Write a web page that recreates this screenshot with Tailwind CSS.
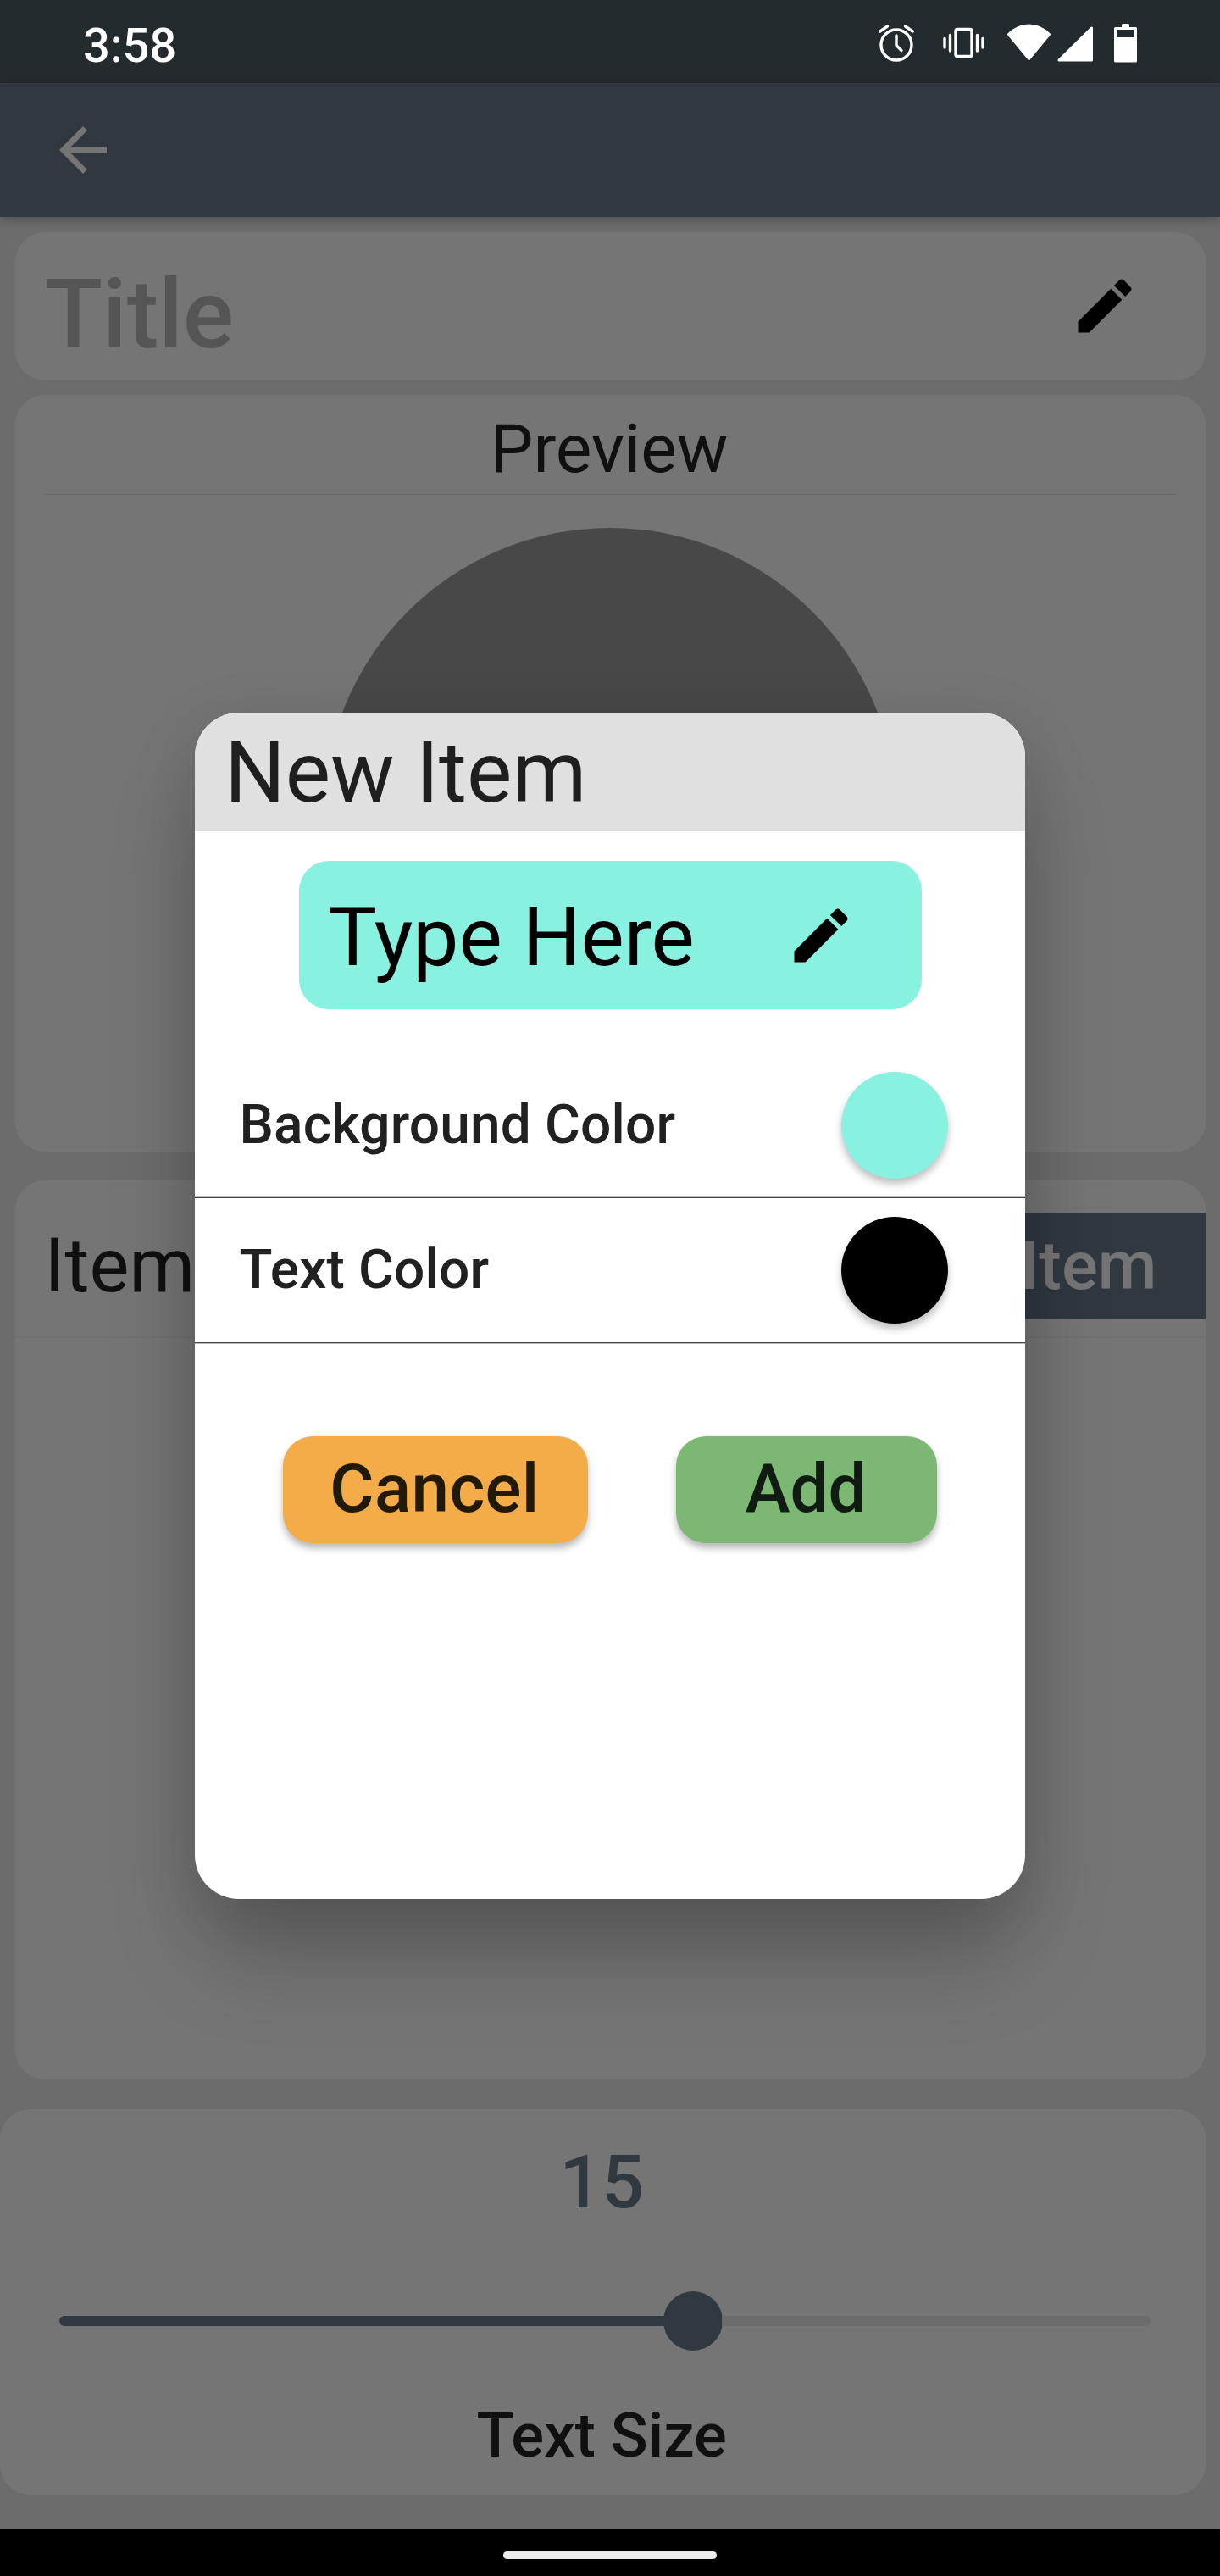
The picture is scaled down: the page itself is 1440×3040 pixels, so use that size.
<!DOCTYPE html>
<html lang="en">
<head>
<meta charset="utf-8">
<title>New Item</title>
<script src="https://cdn.jsdelivr.net/npm/@tailwindcss/browser@4"></script>
</head>
<body class="bg-[#6c6c6c]">
<div class="relative flex flex-col w-[1440px] h-[3040px] overflow-hidden bg-[#6c6c6c] font-[Roboto,sans-serif] text-[#101010]">

  <!-- Status bar -->
  <header class="flex items-center justify-between h-[98px] shrink-0 bg-[#242b2e] pl-[98px] pr-[97px] text-white">
    <span class="text-[56px] leading-[98px] font-medium pt-[10px]">3:58</span>
    <svg class="w-[309px] h-[60px] mt-[2px]" viewBox="1034 20 309 60" fill="none" stroke="white" stroke-width="3.4" stroke-linecap="round" stroke-linejoin="round">
      <circle cx="1058" cy="53" r="18"/>
      <path d="M1058 42v11.5l6 6M1038.7 37l8.8-6M1077.3 37l-8.800-6"/>
      <rect x="1128" y="34.500" width="19" height="32" rx="2"/>
      <path d="M1121.500 41.500v18.500M1153.500 41.500v18.500M1115 45.500v10.500M1160 45.500v10.500"/>
      <path fill="white" stroke-width="3" d="M1214.500 69.500L1190.500 40.500Q1201 30 1214.500 30T1238.500 40.500Z"/>
      <path fill="white" stroke-width="3" d="M1288.500 33v38h-38.500Z"/>
      <path fill="white" stroke="none" fill-rule="evenodd" d="M1324 32v-2.500q0-1.500 1.500-1.500h6q1.500 0 1.500 1.500V32h7.500q1.500 0 1.500 1.500v38.500q0 1.500-1.500 1.500h-24q-1.500 0-1.500-1.500V33.500q0-1.500 1.500-1.500ZM1318 35v9h21v-9Z"/>
    </svg>
  </header>

  <!-- App bar -->
  <nav class="flex items-center h-[157.500px] shrink-0 bg-[#31383f] pl-14 shadow-[0_3px_12px_rgba(0,0,0,0.28)]">
    <svg class="size-[84px]" viewBox="0 0 24 24" fill="#757575"><path d="M20 11H7.830l5.590-5.590L12 4l-8 8 8 8 1.410-1.410L7.830 13H20v-2z"/></svg>
  </nav>

  <main class="relative flex flex-col grow">
    <section class="flex items-center justify-between mx-[17.500px] mt-[18px] h-[175px] rounded-[35px] bg-[#757575] pl-[35px] pr-[77px]">
      <span class="text-[112.500px] leading-[130px] font-medium text-[#555555] pt-[22px]">Title</span>
      <svg class="size-[84px]" viewBox="0 0 24 24" fill="black"><path d="M3 17.250V21h3.750L17.810 9.940l-3.750-3.750L3 17.250zM20.710 7.040c.39-.39.39-1.020 0-1.410l-2.340-2.340c-.39-.39-1.020-.39-1.410 0l-1.830 1.830 3.750 3.750 1.830-1.830z"/></svg>
    </section>

    <section class="flex flex-col items-center mx-[17.500px] mt-[17.500px] h-[892.500px] rounded-[35px] bg-[#757575] overflow-hidden">
      <h2 class="self-stretch mx-[35px] h-[117.500px] shrink-0 border-b border-[#696969] pt-[11px] pr-[2px] text-center text-[80.300px] leading-[107px]">Preview</h2>
      <div class="mt-[39px] size-[676px] shrink-0 rounded-full bg-[#484848]"></div>
    </section>

    <section class="mx-[17.500px] mt-[34.500px] h-[1061px] rounded-[35px] bg-[#757575]">
      <div class="flex items-center justify-between h-[186px] border-b border-[#6f6f6f] pt-[17px] pl-[35px]">
        <span class="text-[88.500px] leading-[104px]">Items</span>
        <span class="flex items-center h-[126px] bg-[#303940] pl-14 pr-[57px] text-[80px] leading-[126px] font-medium text-[#757575]">Add Item</span>
      </div>
    </section>

    <section class="flex flex-col items-center mr-[17.500px] mt-[35px] h-[454.500px] rounded-[35px] bg-[#757575] font-medium">
      <span class="mt-[34px] pr-[2px] text-[88px] leading-[104px] text-[#303940]">15</span>
      <div class="flex items-center self-stretch ml-[70px] mr-[65px] mt-[77px]">
        <span class="w-[714px] -mr-px h-[11.500px] rounded-l-full bg-[#303940]"></span>
        <span class="size-[70px] rounded-full bg-[#303940]"></span>
        <span class="grow h-[11.500px] -ml-px rounded-r-full bg-[#6c6c6c]"></span>
      </div>
      <span class="mt-[58px] pr-[2px] text-[72.500px] leading-[86px]">Text Size</span>
    </section>
  </main>

  <!-- System navigation bar -->
  <footer class="relative flex justify-center h-14 shrink-0 bg-black pt-[27px]">
    <span class="h-[9px] w-[252px] rounded-full bg-[#ececec]"></span>
  </footer>

  <!-- New item dialog -->
  <div role="dialog" class="absolute left-[230px] top-[841px] w-[980px] h-[1400px] rounded-[52px] bg-white shadow-[0_75px_110px_-10px_rgba(0,0,0,0.22),0_20px_80px_rgba(0,0,0,0.12)]">
    <div class="flex flex-col size-full rounded-[52px] overflow-hidden">
      <h1 class="h-[140px] shrink-0 bg-[#e0e0e0] pl-[35px] pt-px text-[100.600px] leading-[140px] text-[#1f1f1f]">New Item</h1>
      <div class="flex items-center justify-between self-center mt-[35px] w-[735px] h-[175px] shrink-0 rounded-[35px] bg-[#88f1df] pl-[35px] pr-[77px] text-black">
        <span class="text-[96.500px] leading-[120px] pt-[5px]">Type Here</span>
        <svg class="size-[84px]" viewBox="0 0 24 24" fill="black"><path d="M3 17.250V21h3.750L17.810 9.940l-3.750-3.750L3 17.250zM20.710 7.040c.39-.39.39-1.020 0-1.410l-2.340-2.340c-.39-.39-1.020-.39-1.410 0l-1.830 1.830 3.750 3.750 1.830-1.830z"/></svg>
      </div>
      <div class="flex items-center justify-between mt-[51px] h-[172px] shrink-0 border-b border-[#444] shadow-[inset_0_-1px_#bbb] pl-[52.500px] pr-[91px]">
        <span class="text-[64px] leading-[76px] font-medium tracking-[0.170px] text-[#212121]">Background Color</span>
        <span class="size-[126px] rounded-full bg-[#88f1df] shadow-[0_6px_10px_rgba(0,0,0,0.26)]"></span>
      </div>
      <div class="flex items-center justify-between h-[171px] shrink-0 border-b border-[#444] shadow-[0_1px_#bbb] pl-[52.500px] pr-[91px]">
        <span class="text-[64px] leading-[76px] font-medium tracking-[0.170px] text-[#212121]">Text Color</span>
        <span class="size-[126px] rounded-full bg-black shadow-[0_6px_10px_rgba(0,0,0,0.26)]"></span>
      </div>
      <div class="flex gap-[104px] mt-[110px] pl-[104px] text-[80px] leading-[124px] font-medium">
        <button class="w-[360px] h-[126px] rounded-[35px] bg-[#f3ac48] pb-[2px] pr-[2px] text-[#211a08] tracking-[0.400px] shadow-[0_6px_9px_rgba(0,0,0,0.28)]">Cancel</button>
        <button class="w-[308px] h-[126px] rounded-[35px] bg-[#7cb874] pb-[2px] pr-[2px] text-[#101c12] shadow-[0_6px_9px_rgba(0,0,0,0.28)]">Add</button>
      </div>
    </div>
  </div>
</div>
</body>
</html>
